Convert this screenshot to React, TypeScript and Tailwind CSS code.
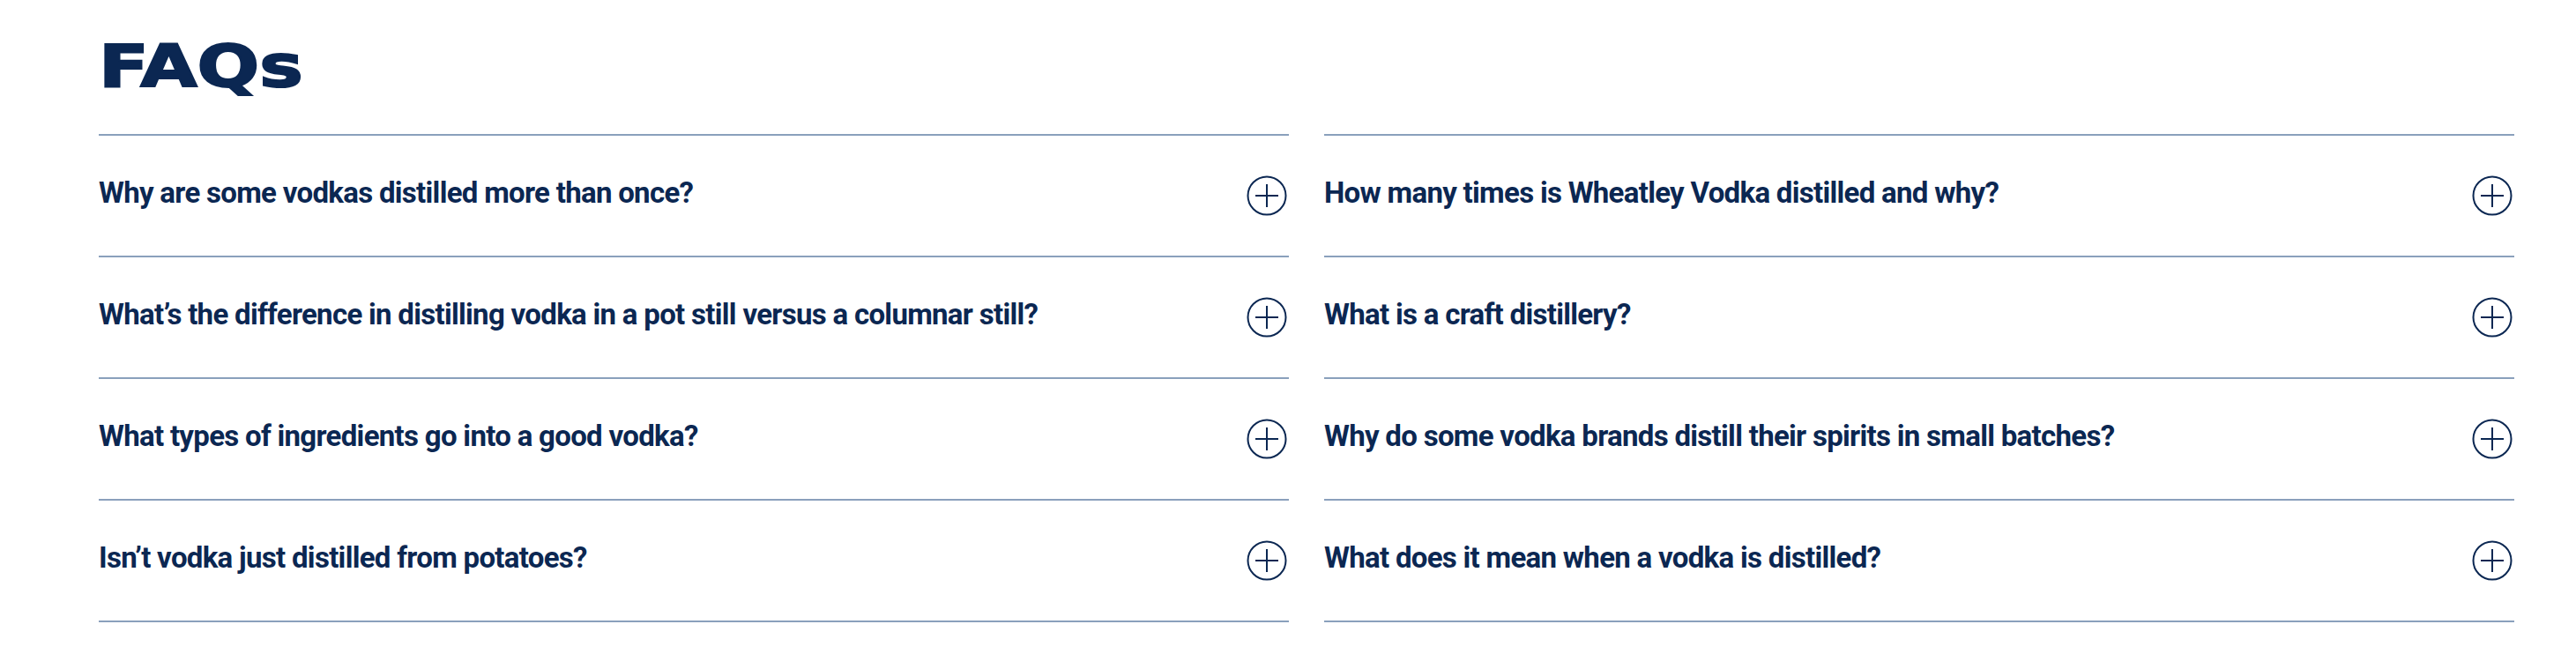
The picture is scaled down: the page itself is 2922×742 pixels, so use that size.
const leftFaqs = [
  "Why are some vodkas distilled more than once?",
  "What’s the difference in distilling vodka in a pot still versus a columnar still?",
  "What types of ingredients go into a good vodka?",
  "Isn’t vodka just distilled from potatoes?",
]

const rightFaqs = [
  "How many times is Wheatley Vodka distilled and why?",
  "What is a craft distillery?",
  "Why do some vodka brands distill their spirits in small batches?",
  "What does it mean when a vodka is distilled?",
]

const PlusCircle = () => (
  <svg width="46" height="46" viewBox="0 0 46 46" fill="none" className="shrink-0">
    <circle cx="23" cy="23" r="21.5" stroke="#0b2752" strokeWidth="2" />
    <path d="M10 23H36M23 10V36" stroke="#0b2752" strokeWidth="2" />
  </svg>
)

const FaqColumn = ({ items }: { items: string[] }) => {
  return (
    <div className="flex flex-col border-b-2 border-[#8aa0bc]">
      {items.map((q) => (
        <button
          key={q}
          type="button"
          className="flex h-[138px] w-full items-center justify-between border-t-2 border-[#8aa0bc] pr-[2px] text-left"
        >
          <span className="mb-[6px] text-[33px] font-bold tracking-[-0.7px] text-[#0b2752] font-['Roboto',sans-serif]">
            {q}
          </span>
          <PlusCircle />
        </button>
      ))}
    </div>
  )
}

export default function App() {
  return (
    <div className="min-h-[742px] w-full bg-white pl-[112px] pr-[70px] pt-[43px]">
      <h2 className="inline-block origin-left scale-x-[1.26] font-['DejaVu_Sans',sans-serif] text-[66px] font-bold leading-none text-[#0b2752] [-webkit-text-stroke:2px_#0b2752]">
        FAQs
      </h2>
      <div className="mt-[43px] grid grid-cols-2 gap-x-[40px]">
        <FaqColumn items={leftFaqs} />
        <FaqColumn items={rightFaqs} />
      </div>
    </div>
  )
}
